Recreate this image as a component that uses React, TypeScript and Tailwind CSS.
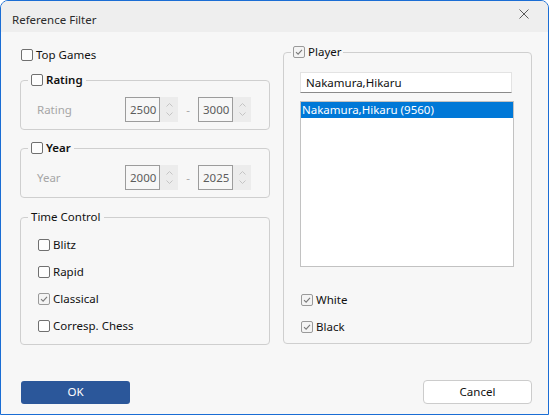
import React from "react";

const FONT = { fontFamily: '"Segoe UI", "Noto Sans", "Open Sans", sans-serif' };

function Box({ checked = false }: { checked?: boolean }) {
  return (
    <span
      className={
        "flex h-[12px] w-[12px] shrink-0 items-center justify-center rounded-[2px] border " +
        (checked ? "border-[#9a9a9a] bg-[#f4f4f4]" : "border-[#707070] bg-[#fdfdfd]")
      }
    >
      {checked && (
        <svg width="8" height="8" viewBox="0 0 8 8">
          <path d="M1 4.2 L3.1 6.2 L7 1.8" fill="none" stroke="#7a7a7a" strokeWidth="1.1" />
        </svg>
      )}
    </span>
  );
}

function Check({ label, checked = false, bold = false }: { label: string; checked?: boolean; bold?: boolean }) {
  return (
    <span className="flex h-[16px] items-center gap-[3px]">
      <Box checked={checked} />
      <span className={"text-[11.5px] leading-[16px] text-[#111111] " + (bold ? "font-semibold" : "")}>{label}</span>
    </span>
  );
}

function Spin({ value }: { value: string }) {
  return (
    <div className="flex h-[25px]">
      <div className="flex w-[35px] items-center border border-[#9c9c9c] bg-[#f7f7f7] pl-[4px] text-[11.5px] text-[#5c5c5c]">
        {value}
      </div>
      <div className="flex w-[18px] flex-col items-center justify-center gap-[5px] bg-[#ececec]">
        <svg width="7" height="4" viewBox="0 0 7 4">
          <path d="M0.5 3.5 L3.5 0.5 L6.5 3.5" fill="none" stroke="#c4c4c4" strokeWidth="1" />
        </svg>
        <svg width="7" height="4" viewBox="0 0 7 4">
          <path d="M0.5 0.5 L3.5 3.5 L6.5 0.5" fill="none" stroke="#c4c4c4" strokeWidth="1" />
        </svg>
      </div>
    </div>
  );
}

function RangeGroup({ title, from, to }: { title: string; from: string; to: string }) {
  return (
    <fieldset className="rounded-[4px] border border-[#cfcfcf]">
      <legend className="ml-[7px] px-[3px]">
        <Check label={title} bold />
      </legend>
      <div className="flex items-center pt-[9px] pb-[7px] pl-[16px]">
        <span className="w-[88px] text-[11.5px] text-[#a6a6a6]">{title}</span>
        <Spin value={from} />
        <span className="w-[20px] text-center text-[11.5px] text-[#a6a6a6]">-</span>
        <Spin value={to} />
      </div>
    </fieldset>
  );
}

export default function App() {
  return (
    <div style={FONT} className="h-[415px] w-[549px] overflow-hidden">
      <div className="flex h-[415px] w-[549px] flex-col overflow-hidden rounded-t-[8px] border border-[#1a6dd4] bg-[#f7f7f7]">
        <div className="flex h-[31px] shrink-0 items-center justify-between bg-[#eeeeee] pl-[11px] pr-[19px]">
          <span className="pt-[7px] text-[11.5px] text-[#2b2b2b]">Reference Filter</span>
          <svg width="10" height="10" viewBox="0 0 10 10" className="mb-[6px]">
            <path d="M0.5 0.5 L9.5 9.5 M9.5 0.5 L0.5 9.5" stroke="#5a5a5a" strokeWidth="1" />
          </svg>
        </div>
        <div className="flex flex-1 flex-col pl-[19px] pr-[15px] pt-[15px]">
          <div className="flex gap-[13px]">
            <div className="flex w-[250px] flex-col">
              <div className="pl-[1px]">
                <Check label="Top Games" />
              </div>
              <div className="mt-[9px]">
                <RangeGroup title="Rating" from="2500" to="3000" />
              </div>
              <div className="mt-[10px]">
                <RangeGroup title="Year" from="2000" to="2025" />
              </div>
              <fieldset className="mt-[11px] rounded-[4px] border border-[#cfcfcf]">
                <legend className="ml-[7px] px-[3px] text-[11.5px] leading-[16px] text-[#111111]">Time Control</legend>
                <div className="flex flex-col gap-[11px] pl-[17px] pt-[12px] pb-[10px]">
                  <Check label="Blitz" />
                  <Check label="Rapid" />
                  <Check label="Classical" checked />
                  <Check label="Corresp. Chess" />
                </div>
              </fieldset>
            </div>
            <div className="flex w-[249px] flex-col">
              <fieldset className="-mt-[3px] rounded-[4px] border border-[#cfcfcf]">
                <legend className="ml-[7px] px-[2px]">
                  <Check label="Player" checked />
                </legend>
                <div className="flex flex-col pl-[16px] pt-[12px] pb-[8px]">
                  <div className="flex h-[21px] w-[212px] items-center border border-[#e3e3e3] border-b-[#8a8a8a] bg-white pl-[5px] text-[11.5px] text-[#111111]">
                    Nakamura,Hikaru
                  </div>
                  <div className="mt-[8px] h-[166px] w-[214px] border border-[#c2c2c2] bg-white">
                    <div className="flex h-[16px] items-center bg-[#0078d7] pl-[1px] text-[11.5px] text-white">
                      Nakamura,Hikaru (9560)
                    </div>
                  </div>
                  <div className="mt-[25px] pl-[1px]">
                    <Check label="White" checked />
                  </div>
                  <div className="mt-[11px] pl-[1px]">
                    <Check label="Black" checked />
                  </div>
                </div>
              </fieldset>
            </div>
          </div>
          <div className="mt-[35px] flex items-center justify-between pl-[1px] pr-[1px]">
            <button className="h-[23px] w-[109px] rounded-[3px] bg-[#2b579a] text-[11.5px] text-white">OK</button>
            <button className="h-[24px] w-[109px] rounded-[4px] border border-[#cccccc] bg-white text-[11.5px] text-[#111111]">
              Cancel
            </button>
          </div>
        </div>
      </div>
    </div>
  );
}
